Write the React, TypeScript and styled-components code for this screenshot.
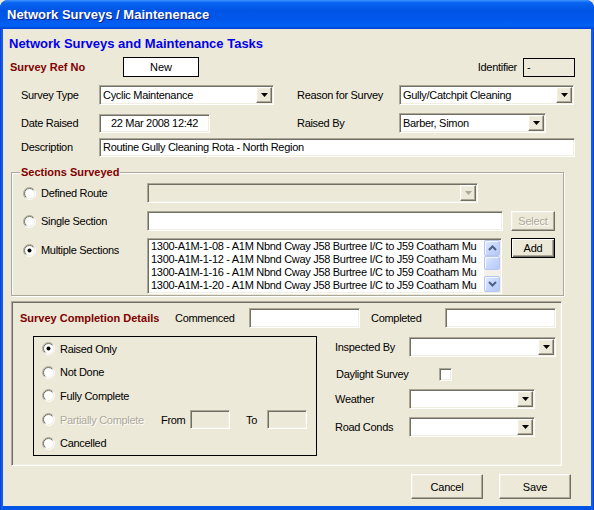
import React from "react";
import styled, { createGlobalStyle, css } from "styled-components";

const GlobalStyle = createGlobalStyle`
  html, body { margin: 0; padding: 0; background: #ECE9D8; }
  body { font-family: "Liberation Sans", Arial, sans-serif; font-size: 11px; color: #000; }
  * { box-sizing: border-box; }
`;

const sunken = css`
  border: 1px solid;
  border-color: #ACA899 #FFFFFF #FFFFFF #ACA899;
  box-shadow: inset 1px 1px 0 #716F64, inset -1px -1px 0 #F1EFE2;
`;

const raised = css`
  border: 1px solid;
  border-color: #FFFFFF #716F64 #716F64 #FFFFFF;
  box-shadow: inset -1px -1px 0 #ACA899, inset 1px 1px 0 #F1EFE2;
`;

const Window = styled.div`
  width: 594px;
  height: 510px;
  display: flex;
  flex-direction: column;
  background: linear-gradient(90deg, #0831D9 0px, #166AEE 2px, #0055E5 3px, #0055E5 591px, #166AEE 592px, #0831D9 594px);
  border-radius: 8px 8px 0 0;
  overflow: hidden;
`;

const TitleBar = styled.div`
  height: 29px;
  flex: none;
  display: flex;
  align-items: center;
  padding-left: 7px;
  background: linear-gradient(180deg, #3D95FF 0%, #0A65F2 9%, #0055E5 35%, #0058EC 70%, #0062F4 86%, #0058E8 93%, #003DD7 100%);
  color: #fff;
  font-weight: bold;
  font-size: 13px;
  text-shadow: 1px 1px 0 #0A1E8C;
`;

const Frame = styled.div`
  flex: 1;
  margin: 0 3px 4px;
  background: #ECE9D8;
  display: flex;
  flex-direction: column;
`;

const Heading = styled.div`
  margin: 7px 0 0 6px;
  font-size: 13px;
  line-height: 16px;
  font-weight: bold;
  color: #0000F0;
`;

const Row = styled.div<{ $mt?: number; $pl?: number; $pr?: number; $h?: number; $top?: boolean }>`
  display: flex;
  align-items: ${(p) => (p.$top ? "flex-start" : "center")};
  margin-top: ${(p) => p.$mt ?? 0}px;
  padding-left: ${(p) => p.$pl ?? 0}px;
  padding-right: ${(p) => p.$pr ?? 0}px;
  height: ${(p) => (p.$h === undefined ? "20px" : p.$h === 0 ? "auto" : `${p.$h}px`)};
`;

const Label = styled.span<{ $w?: number; $ml?: number; $mr?: number; $disabled?: boolean }>`
  flex: none;
  width: ${(p) => (p.$w ? `${p.$w}px` : "auto")};
  margin-left: ${(p) => p.$ml ?? 0}px;
  margin-right: ${(p) => p.$mr ?? 0}px;
  letter-spacing: -0.3px;
  white-space: nowrap;
  color: ${(p) => (p.$disabled ? "#ACA899" : "#000")};
  text-shadow: ${(p) => (p.$disabled ? "1px 1px 0 #FFFFFF" : "none")};
`;

const RedTitle = styled.span<{ $w?: number }>`
  flex: none;
  width: ${(p) => (p.$w ? `${p.$w}px` : "auto")};
  font-weight: bold;
  color: #800000;
  white-space: nowrap;
`;

const Spacer = styled.div`
  flex: 1;
`;

const TextBox = styled.div<{ $w: number; $h?: number; $center?: boolean; $disabled?: boolean; $ml?: number }>`
  ${sunken};
  flex: none;
  width: ${(p) => p.$w}px;
  height: ${(p) => p.$h ?? 19}px;
  margin-left: ${(p) => p.$ml ?? 0}px;
  background: ${(p) => (p.$disabled ? "#ECE9D8" : "#FFFFFF")};
  padding: 0 3px;
  display: flex;
  align-items: center;
  justify-content: ${(p) => (p.$center ? "center" : "flex-start")};
  white-space: nowrap;
  overflow: hidden;
  letter-spacing: -0.3px;
`;

const PlainBox = styled.div<{ $w: number; $h: number; $white?: boolean }>`
  flex: none;
  width: ${(p) => p.$w}px;
  height: ${(p) => p.$h}px;
  border: 1px solid #000;
  background: ${(p) => (p.$white ? "#FFFFFF" : "transparent")};
  display: flex;
  align-items: center;
  justify-content: ${(p) => (p.$white ? "center" : "flex-start")};
  padding-left: ${(p) => (p.$white ? 0 : 3)}px;
`;

const SelectBox = styled.div<{ $w: number; $disabled?: boolean }>`
  ${sunken};
  flex: none;
  width: ${(p) => p.$w}px;
  height: 20px;
  padding: 1px;
  display: flex;
  background: ${(p) => (p.$disabled ? "#ECE9D8" : "#FFFFFF")};
`;

const SelectText = styled.div`
  flex: 1;
  padding-left: 2px;
  display: flex;
  align-items: center;
  white-space: nowrap;
  overflow: hidden;
  letter-spacing: -0.3px;
`;

const DropButton = styled.div`
  ${raised};
  flex: none;
  width: 16px;
  height: 16px;
  background: #ECE9D8;
  display: flex;
  align-items: center;
  justify-content: center;
`;

const Select = ({ w, value, disabled }: { w: number; value?: string; disabled?: boolean }) => (
  <SelectBox $w={w} $disabled={disabled}>
    <SelectText>{value}</SelectText>
    <DropButton>
      <svg width="7" height="4" viewBox="0 0 7 4">
        <polygon points="0,0 7,0 3.5,4" fill={disabled ? "#ACA899" : "#000"} />
      </svg>
    </DropButton>
  </SelectBox>
);

const GroupBox = styled.fieldset`
  margin: 9px 0 0 8px;
  width: 553px;
  min-width: 0;
  padding: 4px 0 1px 0;
  border: 1px solid #ACA899;
  box-shadow: inset 1px 1px 0 #FFFFFF, 1px 1px 0 #FFFFFF;
`;

const Legend = styled.legend`
  margin-left: 8px;
  padding: 0 1px;
  font-weight: bold;
  color: #800000;
  line-height: 13px;
  background: #ECE9D8;
`;

const RadioWrap = styled.div<{ $w: number; $mt?: number }>`
  flex: none;
  width: ${(p) => p.$w}px;
  height: 20px;
  margin-top: ${(p) => p.$mt ?? 0}px;
  display: flex;
  align-items: center;
  gap: 5px;
`;

const RadioSvg = styled.svg`
  flex: none;
  display: block;
`;

const RadioIcon = ({ checked }: { checked?: boolean }) => (
  <RadioSvg width="13" height="13" viewBox="0 0 13 13">
    <defs>
      <linearGradient id="rgOuter" x1="0" y1="0" x2="1" y2="1">
        <stop offset="0" stopColor="#ACA899" />
        <stop offset="0.45" stopColor="#ACA899" />
        <stop offset="0.6" stopColor="#FFFFFF" />
        <stop offset="1" stopColor="#FFFFFF" />
      </linearGradient>
      <linearGradient id="rgInner" x1="0" y1="0" x2="1" y2="1">
        <stop offset="0" stopColor="#716F64" />
        <stop offset="0.45" stopColor="#716F64" />
        <stop offset="0.6" stopColor="#F1EFE2" />
        <stop offset="1" stopColor="#F1EFE2" />
      </linearGradient>
    </defs>
    <circle cx="6.5" cy="6.5" r="6" fill="none" stroke="url(#rgOuter)" strokeWidth="1" />
    <circle cx="6.5" cy="6.5" r="5" fill="#FFFFFF" stroke="url(#rgInner)" strokeWidth="1" />
    {checked && <circle cx="6.5" cy="6.5" r="2" fill="#000" />}
  </RadioSvg>
);

const RadioOption = ({
  w,
  label,
  checked,
  disabled,
  mt,
}: {
  w: number;
  label: string;
  checked?: boolean;
  disabled?: boolean;
  mt?: number;
}) => (
  <RadioWrap $w={w} $mt={mt}>
    <RadioIcon checked={checked} />
    <Label $disabled={disabled}>{label}</Label>
  </RadioWrap>
);

const Btn = styled.button<{ $w: number; $h: number; $ml?: number; $default?: boolean }>`
  ${raised};
  flex: none;
  width: ${(p) => p.$w}px;
  height: ${(p) => p.$h}px;
  margin: 0 0 0 ${(p) => p.$ml ?? 0}px;
  padding: 0;
  background: #ECE9D8;
  font: inherit;
  letter-spacing: -0.2px;
  color: #000;
  display: flex;
  align-items: center;
  justify-content: center;
  ${(p) =>
    p.$default &&
    css`
      border: 1px solid #000;
      box-shadow: inset 1px 1px 0 #FFFFFF, inset -1px -1px 0 #716F64, inset -2px -2px 0 #ACA899;
    `}
  &:disabled {
    color: #ACA899;
    text-shadow: 1px 1px 0 #FFFFFF;
  }
`;

const ListBox = styled.div<{ $w: number; $h: number }>`
  ${sunken};
  flex: none;
  width: ${(p) => p.$w}px;
  height: ${(p) => p.$h}px;
  padding: 1px;
  background: #FFFFFF;
  display: flex;
`;

const ListItems = styled.div`
  flex: 1;
  overflow: hidden;
  padding-left: 2px;
`;

const ListItem = styled.div`
  height: 13px;
  line-height: 13px;
  white-space: nowrap;
  letter-spacing: -0.3px;
`;

const ScrollBar = styled.div`
  flex: none;
  width: 16px;
  display: flex;
  flex-direction: column;
  background: #F3F1EA;
`;

const scrollPart = css`
  border: 1px solid #B4C6F2;
  border-radius: 2px;
  background: linear-gradient(135deg, #E2EAFE 0%, #C6D6FC 50%, #B6C9F4 100%);
  box-shadow: inset 1px 1px 0 #F4F7FF;
`;

const ScrollButton = styled.div`
  ${scrollPart};
  height: 16px;
  flex: none;
  display: flex;
  align-items: center;
  justify-content: center;
`;

const ScrollThumb = styled.div`
  ${scrollPart};
  height: 14px;
  flex: none;
`;

const ScrollTrack = styled.div`
  flex: 1;
`;

const Chevron = ({ up }: { up?: boolean }) => (
  <svg width="9" height="6" viewBox="0 0 9 6">
    <polyline
      points={up ? "1,5 4.5,1.5 8,5" : "1,1 4.5,4.5 8,1"}
      fill="none"
      stroke="#4D6185"
      strokeWidth="2"
    />
  </svg>
);

const CompletionBox = styled.div`
  ${sunken};
  margin: 5px 0 0 8px;
  width: 551px;
  height: 165px;
  padding: 1px 0 0 0;
  display: flex;
  flex-direction: column;
`;

const CompletionBody = styled.div`
  display: flex;
  align-items: flex-start;
  margin-top: 8px;
  padding-left: 21px;
`;

const StatusBox = styled.div`
  flex: none;
  width: 284px;
  height: 120px;
  border: 1px solid #000;
  padding-left: 8px;
  display: flex;
  flex-direction: column;
`;

const StatusRow = styled.div`
  flex: none;
  height: 23.6px;
  display: flex;
  align-items: center;
`;

const SideColumn = styled.div`
  margin-left: 18px;
  display: flex;
  flex-direction: column;
`;

const CheckBox = styled.div`
  ${sunken};
  flex: none;
  width: 13px;
  height: 13px;
  background: #FFFFFF;
`;

const ButtonBar = styled.div`
  display: flex;
  justify-content: flex-end;
  gap: 16px;
  margin-top: 8px;
  padding-right: 20px;
`;

const sectionText = "1300-A1M-1-{n} - A1M Nbnd Cway J58 Burtree I/C to J59 Coatham Mu";
const sectionItems = ["08", "12", "16", "20"].map((n) => sectionText.replace("{n}", n));

export default function App() {
  return (
    <>
      <GlobalStyle />
      <Window>
        <TitleBar>Network Surveys / Maintenenace</TitleBar>
        <Frame>
          <Heading>Network Surveys and Maintenance Tasks</Heading>

          <Row $mt={5} $pl={7} $pr={16}>
            <RedTitle $w={113}>Survey Ref No</RedTitle>
            <PlainBox $w={76} $h={20} $white>
              New
            </PlainBox>
            <Spacer />
            <Label $mr={6}>Identifier</Label>
            <PlainBox $w={52} $h={19}>
              -
            </PlainBox>
          </Row>

          <Row $mt={8} $pl={18}>
            <Label $w={78}>Survey Type</Label>
            <Select w={175} value="Cyclic Maintenance" />
            <Label $w={102} $ml={23}>
              Reason for Survey
            </Label>
            <Select w={175} value="Gully/Catchpit Cleaning" />
          </Row>

          <Row $mt={8} $pl={18}>
            <Label $w={78}>Date Raised</Label>
            <TextBox $w={111} $center>
              22 Mar 2008 12:42
            </TextBox>
            <Label $w={102} $ml={87}>
              Raised By
            </Label>
            <Select w={147} value="Barber, Simon" />
          </Row>

          <Row $mt={4} $pl={18}>
            <Label $w={78}>Description</Label>
            <TextBox $w={476}>Routine Gully Cleaning Rota - North Region</TextBox>
          </Row>

          <GroupBox>
            <Legend>Sections Surveyed</Legend>
            <Row $pl={11}>
              <RadioOption w={124} label="Defined Route" />
              <Select w={331} disabled />
            </Row>
            <Row $mt={8} $pl={11}>
              <RadioOption w={124} label="Single Section" />
              <TextBox $w={356} $h={20} />
              <Btn $w={44} $h={20} $ml={8} disabled>
                Select
              </Btn>
            </Row>
            <Row $mt={7} $pl={11} $h={0} $top>
              <RadioOption w={124} label="Multiple Sections" checked mt={2} />
              <ListBox $w={355} $h={56}>
                <ListItems>
                  {sectionItems.map((s, i) => (
                    <ListItem key={i}>{s}</ListItem>
                  ))}
                </ListItems>
                <ScrollBar>
                  <ScrollButton>
                    <Chevron up />
                  </ScrollButton>
                  <ScrollThumb />
                  <ScrollTrack />
                  <ScrollButton>
                    <Chevron />
                  </ScrollButton>
                </ScrollBar>
              </ListBox>
              <Btn $w={44} $h={20} $ml={9} $default>
                Add
              </Btn>
            </Row>
          </GroupBox>

          <CompletionBox>
            <Row $mt={5} $pl={8}>
              <RedTitle $w={155}>Survey Completion Details</RedTitle>
              <Label $w={74}>Commenced</Label>
              <TextBox $w={111} $h={20} />
              <Label $w={74} $ml={11}>
                Completed
              </Label>
              <TextBox $w={111} $h={20} />
            </Row>
            <CompletionBody>
              <StatusBox>
                <StatusRow>
                  <RadioOption w={119} label="Raised Only" checked />
                </StatusRow>
                <StatusRow>
                  <RadioOption w={119} label="Not Done" />
                </StatusRow>
                <StatusRow>
                  <RadioOption w={119} label="Fully Complete" />
                </StatusRow>
                <StatusRow>
                  <RadioOption w={119} label="Partially Complete" disabled />
                  <Label $w={29}>From</Label>
                  <TextBox $w={40} $disabled />
                  <Label $w={21} $ml={16}>
                    To
                  </Label>
                  <TextBox $w={40} $disabled />
                </StatusRow>
                <StatusRow>
                  <RadioOption w={119} label="Cancelled" />
                </StatusRow>
              </StatusBox>
              <SideColumn>
                <Row $mt={1}>
                  <Label $w={74}>Inspected By</Label>
                  <Select w={147} />
                </Row>
                <Row $mt={7}>
                  <Label $w={103} $ml={1}>
                    Daylight Survey
                  </Label>
                  <CheckBox />
                </Row>
                <Row $mt={5}>
                  <Label $w={74}>Weather</Label>
                  <Select w={126} />
                </Row>
                <Row $mt={8}>
                  <Label $w={74}>Road Conds</Label>
                  <Select w={126} />
                </Row>
              </SideColumn>
            </CompletionBody>
          </CompletionBox>

          <ButtonBar>
            <Btn $w={72} $h={25}>
              Cancel
            </Btn>
            <Btn $w={72} $h={25}>
              Save
            </Btn>
          </ButtonBar>
        </Frame>
      </Window>
    </>
  );
}
